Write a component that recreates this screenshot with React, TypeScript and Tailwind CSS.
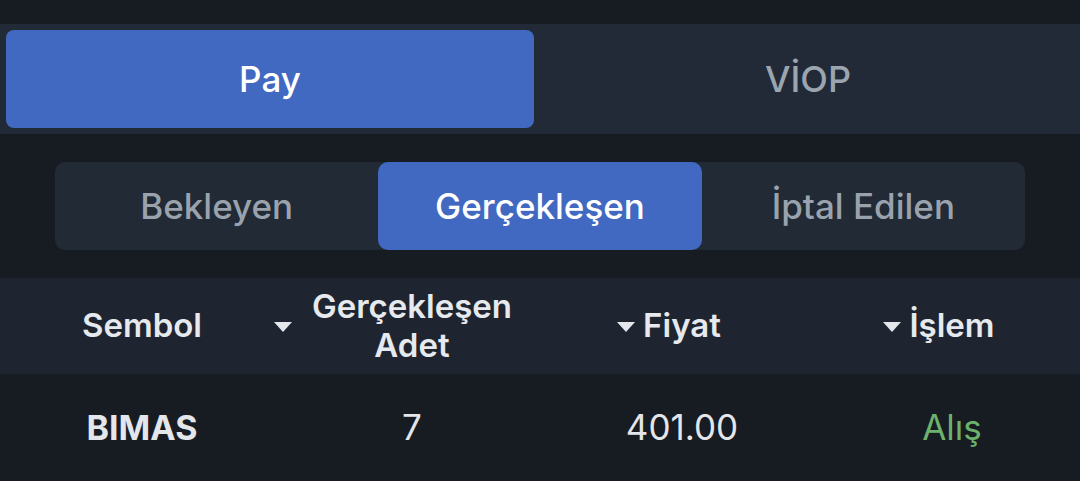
import React from 'react';

const Caret = ({ gap }: { gap: string }) => (
  <svg
    className={`absolute right-full top-1/2 -translate-y-[4px] ${gap}`}
    width="18"
    height="10"
    viewBox="0 0 18 10"
  >
    <path d="M0 0 L18 0 L9 10 Z" fill="#e4e7ec" />
  </svg>
);

export default function App() {
  return (
    <div
      className="h-[481px] w-[1080px] overflow-hidden bg-[#171b22] pt-[24px]"
      style={{ fontFamily: 'Inter, "Noto Sans", sans-serif' }}
    >
      {/* Pay / VİOP */}
      <div className="flex h-[110px] bg-[#212a36] p-[6px]">
        <div className="flex w-[528px] items-center justify-center rounded-[8px] bg-[#4169c1] text-[35px] font-medium text-white">
          Pay
        </div>
        <div className="flex flex-1 items-center justify-center pl-[8px] text-[36px] font-medium text-[#9ba5af]">
          VİOP
        </div>
      </div>

      {/* Order status tabs */}
      <div className="mx-[55px] mt-[28px] grid h-[88px] w-[970px] grid-cols-3 overflow-hidden rounded-[10px] bg-[#212a35] text-[35px] font-medium">
        <div className="flex items-center justify-center text-[#9aa3ad]">Bekleyen</div>
        <div className="flex items-center justify-center rounded-[10px] bg-[#4169c1] text-white">
          Gerçekleşen
        </div>
        <div className="flex items-center justify-center text-[#9aa3ad]">İptal Edilen</div>
      </div>

      {/* Table header */}
      <div className="mt-[28px] grid h-[96px] grid-cols-[repeat(4,270px)] bg-[#1e2530] pl-[7px] text-[33px] font-semibold text-[#e6e9ee]">
        <div className="flex items-center justify-center">Sembol</div>
        <div className="flex items-center justify-center">
          <span className="relative text-center leading-[39px]">
            <Caret gap="mr-[20px]" />
            Gerçekleşen
            <br />
            Adet
          </span>
        </div>
        <div className="flex items-center justify-center">
          <span className="relative">
            <Caret gap="mr-[8px]" />
            Fiyat
          </span>
        </div>
        <div className="flex items-center justify-center">
          <span className="relative">
            <Caret gap="mr-[8px]" />
            İşlem
          </span>
        </div>
      </div>

      {/* Row */}
      <div className="grid h-[107px] grid-cols-[repeat(4,270px)] pl-[7px] text-[35px] text-[#e3e6eb]">
        <div className="flex items-center justify-center text-[34px] font-bold">BIMAS</div>
        <div className="flex items-center justify-center">7</div>
        <div className="flex items-center justify-center">401.00</div>
        <div className="flex items-center justify-center text-[#6cb26c]">Alış</div>
      </div>
    </div>
  );
}
